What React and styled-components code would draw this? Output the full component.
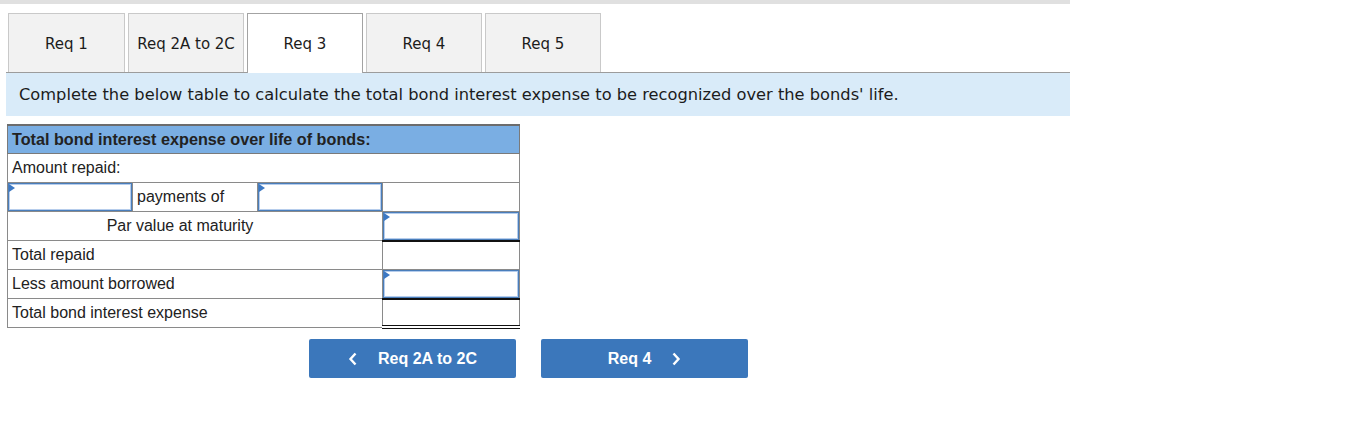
import React from "react";
import styled, { createGlobalStyle } from "styled-components";

const GlobalStyle = createGlobalStyle`
  body {
    margin: 0;
    background: #fff;
    font-family: "Liberation Sans", Arial, sans-serif;
  }
`;

const Page = styled.div`
  width: 1070px;
`;

const TopStrip = styled.div`
  height: 4px;
  background-color: #e0e0e0;
`;

const TabBar = styled.div`
  display: flex;
  align-items: flex-end;
  gap: 3px;
  margin: 9px 0 0 6px;
  padding-left: 2px;
  border-bottom: 1px solid #9c9c9c;
`;

const Tab = styled.div`
  box-sizing: border-box;
  width: ${(p) => p.$w || 116}px;
  height: ${(p) => (p.$active ? 60 : 59)}px;
  margin-bottom: ${(p) => (p.$active ? -1 : 0)}px;
  display: flex;
  align-items: center;
  justify-content: center;
  border: 1px solid ${(p) => (p.$active ? "#a3a3a3" : "#c9c9c9")};
  border-bottom: none;
  background-color: ${(p) => (p.$active ? "#fff" : "#f2f2f2")};
  font-family: "DejaVu Sans", Verdana, sans-serif;
  font-size: 15px;
  color: #1c1c1c;
  padding-top: 2px;
  padding-bottom: ${(p) => (p.$active ? 1 : 0)}px;
`;

const Instruction = styled.div`
  margin-left: 6px;
  height: 43px;
  display: flex;
  align-items: center;
  padding-left: 13px;
  background-color: #d9ebf9;
  font-family: "DejaVu Sans", Verdana, sans-serif;
  font-size: 16.25px;
  color: #1c1c1c;
`;

const Table = styled.table`
  margin: 8px 0 0 7px;
  width: 512px;
  border-collapse: collapse;
  table-layout: fixed;
  font-size: 16px;
  color: #222;
  border: 1px solid #7a7a7a;
`;

const HeadCell = styled.th`
  height: 27px;
  padding: 0 4px;
  text-align: left;
  font-weight: bold;
  font-size: 16.2px;
  background-color: #7aaee3;
  border: 1px solid #7a7a7a;
  border-top: 2px solid #6c6c6c;
`;

const Cell = styled.td`
  box-sizing: border-box;
  height: 28.5px;
  padding: 0 4px;
  border: 1px solid #8a8a8a;
  text-align: ${(p) => p.$align || "left"};
  border-top: ${(p) => (p.$sum ? "2px solid #111" : undefined)};
  border-bottom: ${(p) => (p.$total ? "4px double #111" : undefined)};
  white-space: nowrap;
`;

const InputCell = styled.td`
  box-sizing: border-box;
  height: 28.5px;
  padding: 0;
  border: 1px solid #8a8a8a;
`;

const InputBox = styled.div`
  position: relative;
  box-sizing: border-box;
  height: 28px;
  border: 1px solid #4a7ebb;
  box-shadow: inset 0 0 0 1px #b6cdec;
  background: #fff;

  &::before {
    content: "";
    position: absolute;
    left: 0;
    top: 0;
    border-top: 4px solid transparent;
    border-bottom: 4px solid transparent;
    border-left: 6px solid #3c78c3;
  }
`;

const NavRow = styled.div`
  display: flex;
  gap: 25px;
  margin: 10px 0 0 309px;
`;

const NavButton = styled.button`
  width: 207px;
  height: 39px;
  display: flex;
  align-items: center;
  justify-content: center;
  gap: 12px;
  border: none;
  border-radius: 2px;
  background-color: #3b77bb;
  color: #fff;
  font-family: "Liberation Sans", Arial, sans-serif;
  font-size: 16px;
  font-weight: bold;
  cursor: pointer;
`;

const Chevron = ({ dir }) => (
  <svg width="10" height="14" viewBox="0 0 10 14">
    <path
      d={dir === "left" ? "M7.5 1.5 L2.5 7 L7.5 12.5" : "M2.5 1.5 L7.5 7 L2.5 12.5"}
      fill="none"
      stroke="#fff"
      strokeWidth="2.4"
    />
  </svg>
);

const tabs = ["Req 1", "Req 2A to 2C", "Req 3", "Req 4", "Req 5"];

export default function App() {
  return (
    <Page>
      <GlobalStyle />
      <TopStrip />
      <TabBar>
        {tabs.map((t, i) => (
          <Tab key={t} $active={i === 2} $w={i === 0 ? 117 : 116}>
            {t}
          </Tab>
        ))}
      </TabBar>
      <Instruction>
        Complete the below table to calculate the total bond interest expense to be recognized over the bonds' life.
      </Instruction>

      <Table>
        <colgroup>
          <col style={{ width: 125 }} />
          <col style={{ width: 125 }} />
          <col style={{ width: 125 }} />
          <col style={{ width: 137 }} />
        </colgroup>
        <thead>
          <tr>
            <HeadCell colSpan={4}>Total bond interest expense over life of bonds:</HeadCell>
          </tr>
        </thead>
        <tbody>
          <tr>
            <Cell colSpan={4}>Amount repaid:</Cell>
          </tr>
          <tr>
            <InputCell><InputBox /></InputCell>
            <Cell>payments of</Cell>
            <InputCell><InputBox /></InputCell>
            <Cell />
          </tr>
          <tr>
            <Cell colSpan={3} $align="center" style={{ paddingRight: 34 }}>Par value at maturity</Cell>
            <InputCell><InputBox /></InputCell>
          </tr>
          <tr>
            <Cell colSpan={3}>Total repaid</Cell>
            <Cell $sum />
          </tr>
          <tr>
            <Cell colSpan={3}>Less amount borrowed</Cell>
            <InputCell><InputBox /></InputCell>
          </tr>
          <tr>
            <Cell colSpan={3}>Total bond interest expense</Cell>
            <Cell $sum $total />
          </tr>
        </tbody>
      </Table>

      <NavRow>
        <NavButton>
          <Chevron dir="left" />
          <span style={{ marginLeft: 8 }}>Req 2A to 2C</span>
        </NavButton>
        <NavButton>
          <span style={{ marginRight: 8 }}>Req 4</span>
          <Chevron dir="right" />
        </NavButton>
      </NavRow>
    </Page>
  );
}
